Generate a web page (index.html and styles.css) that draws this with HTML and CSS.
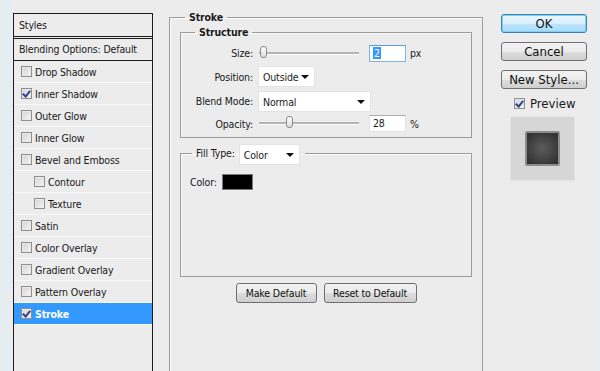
FILE: index.html
```html
<!DOCTYPE html>
<html>
<head>
<title>Layer Style</title>
<link rel="stylesheet" href="styles.css">
</head>
<body>

<div class="dialog">

    <!-- styles list -->
    <div class="styles-list">
        <div class="list-head">Styles</div>
        <div class="list-blend">Blending Options: Default</div>
        <div class="list-item"><span class="check"></span>Drop Shadow</div>
        <div class="list-item"><span class="check checked"></span>Inner Shadow</div>
        <div class="list-item"><span class="check"></span>Outer Glow</div>
        <div class="list-item"><span class="check"></span>Inner Glow</div>
        <div class="list-item"><span class="check"></span>Bevel and Emboss</div>
        <div class="list-item sub"><span class="check"></span>Contour</div>
        <div class="list-item sub"><span class="check"></span>Texture</div>
        <div class="list-item"><span class="check"></span>Satin</div>
        <div class="list-item"><span class="check"></span>Color Overlay</div>
        <div class="list-item"><span class="check"></span>Gradient Overlay</div>
        <div class="list-item"><span class="check"></span>Pattern Overlay</div>
        <div class="list-item selected"><span class="check checked"></span>Stroke</div>
    </div>

    <!-- settings -->
    <fieldset class="group stroke">
        <legend>Stroke</legend>

        <fieldset class="group structure">
            <legend>Structure</legend>

            <div class="row row-size">
                <span class="label">Size:</span>
                <div class="slider"><span class="thumb thumb-size"></span></div>
                <span class="num focused"><span class="sel">2</span></span>
                <span class="unit">px</span>
            </div>

            <div class="row row-pos">
                <span class="label">Position:</span>
                <span class="select select-pos">Outside<span class="arrow"></span></span>
            </div>

            <div class="row row-blend">
                <span class="label">Blend Mode:</span>
                <span class="select select-blend">Normal<span class="arrow"></span></span>
            </div>

            <div class="row row-opacity">
                <span class="label">Opacity:</span>
                <div class="slider"><span class="thumb thumb-opacity"></span></div>
                <span class="num">28</span>
                <span class="unit">%</span>
            </div>
        </fieldset>

        <fieldset class="group fill">
            <legend>Fill Type:<span class="select select-fill">Color<span class="arrow"></span></span></legend>
            <div class="color-row">
                <span>Color:</span>
                <span class="swatch"></span>
            </div>
        </fieldset>

        <div class="default-buttons">
            <button class="btn btn-make">Make Default</button>
            <button class="btn btn-reset">Reset to Default</button>
        </div>
    </fieldset>

    <!-- dialog buttons -->
    <div class="side">
        <button class="btn big ok">OK</button>
        <button class="btn big">Cancel</button>
        <button class="btn big">New Style...</button>
        <div class="preview-check"><span class="check checked"></span>Preview</div>
        <div class="preview-box">
            <div class="preview-square"></div>
        </div>
    </div>

</div>

</body>
</html>
```

FILE: styles.css
```css
body {
    margin: 0;
    background-color: #e6edf1;
    font-family: "DejaVu Sans Condensed", "Liberation Sans", sans-serif;
    font-size: 10.5px;
    letter-spacing: -0.15px;
    color: #1a1a1a;
}

.dialog {
    display: flex;
    align-items: stretch;
    margin-left: 11px;
    width: 584px;
    height: 371px;
    overflow: hidden;
    background-color: #ececec;
}

/* left list */

.styles-list {
    margin: 13px 0 0 2px;
    width: 140px;
    flex-shrink: 0;
    box-sizing: border-box;
    border: 1px solid #1c1c1c;
    border-bottom: none;
}

.list-head {
    height: 22px;
    line-height: 22px;
    padding-left: 5px;
    border-bottom: 3px double #1c1c1c;
}

.list-blend {
    height: 21px;
    line-height: 21px;
    padding-left: 5px;
    border-bottom: 1px solid #1c1c1c;
}

.list-item {
    display: flex;
    align-items: center;
    height: 21px;
    padding-left: 7px;
    border-bottom: 1px solid #f9f9f9;
}

.list-item.sub {
    padding-left: 20px;
}

.list-item.selected {
    background-color: #3399ff;
    color: #ffffff;
    font-weight: bold;
}

.check {
    display: inline-block;
    position: relative;
    width: 11px;
    height: 11px;
    box-sizing: border-box;
    margin-right: 3px;
    border: 1px solid #8e8f8f;
    background: linear-gradient(135deg, #d2d2d2, #f6f6f6);
    box-shadow: inset 0 0 0 1px #eaeaea;
}

.check.checked::after {
    content: "";
    position: absolute;
    left: 2px;
    top: 0px;
    width: 3px;
    height: 6px;
    border-right: 2px solid #31408f;
    border-bottom: 2px solid #31408f;
    transform: rotate(40deg);
}

/* fieldsets */

.group {
    margin: 0;
    border: 1px solid #9c9c9c;
    box-shadow: inset 1px 1px 0 #fafafa;
}

.group legend {
    line-height: 13px;
    font-weight: bold;
}

.stroke {
    margin: 11px 0 0 16px;
    width: 313px;
    flex-shrink: 0;
    box-sizing: border-box;
    padding: 2px 10px 0 10px;
    border-bottom: none;
}

.stroke > legend {
    margin-left: 5px;
    padding: 0 4px;
}

.structure {
    width: 292px;
    box-sizing: border-box;
    padding: 3px 0 3px 0;
}

.structure > legend {
    margin-left: 14px;
    padding: 0 4px;
}

.row {
    display: flex;
    align-items: center;
    height: 24px;
}

.row-size {
    height: 22px;
}

.row-pos {
    height: 25px;
}

.row-opacity {
    height: 21px;
}

.label {
    width: 72px;
    text-align: right;
    margin-right: 5px;
    flex-shrink: 0;
}

.slider {
    position: relative;
    width: 100px;
    height: 2px;
    margin-left: 1px;
    background-color: #b4b4b4;
    border-bottom: 1px solid #ffffff;
}

.thumb {
    position: absolute;
    top: -6px;
    width: 7px;
    height: 12px;
    box-sizing: border-box;
    border: 1px solid #8a8a8a;
    border-radius: 3px;
    background: linear-gradient(#ffffff, #dcdcdc);
}

.thumb-size {
    left: 1px;
}

.thumb-opacity {
    left: 27px;
}

.num {
    display: inline-block;
    width: 37px;
    height: 17px;
    box-sizing: border-box;
    margin-left: 10px;
    padding-left: 3px;
    line-height: 15px;
    background-color: #ffffff;
    border: 1px solid #e2e3ea;
    border-top-color: #abadb3;
}

.num.focused {
    border-color: #7eb4ea;
    border-top-color: #569de5;
}

.sel {
    background-color: #3399ff;
    color: #ffffff;
    padding: 0 1px;
}

.unit {
    margin-left: 4px;
}

.select {
    position: relative;
    display: inline-block;
    height: 21px;
    box-sizing: border-box;
    padding-left: 4px;
    line-height: 21px;
    font-weight: normal;
    background-color: #ffffff;
    border: 1px solid #e3e3e3;
    vertical-align: middle;
}

.select-pos {
    width: 57px;
}

.select-blend {
    width: 113px;
}

.select-fill {
    width: 61px;
    margin-left: 4px;
}

.arrow {
    position: absolute;
    right: 5px;
    top: 8px;
    border-left: 4px solid transparent;
    border-right: 4px solid transparent;
    border-top: 4px solid #111111;
}

.fill {
    width: 292px;
    box-sizing: border-box;
    margin-top: 5px;
    padding: 9px 0 0 9px;
    height: 134px;
}

.fill > legend {
    margin-left: 2px;
    padding: 0 5px 0 4px;
    line-height: 21px;
    font-weight: normal;
}

.color-row {
    display: flex;
    align-items: center;
    gap: 5px;
}

.swatch {
    width: 31px;
    height: 16px;
    box-sizing: border-box;
    background-color: #000000;
    border: 1px solid #7a7a7a;
}

/* buttons */

.btn {
    height: 20px;
    box-sizing: border-box;
    padding: 0;
    font-family: inherit;
    font-size: 10.5px;
    letter-spacing: -0.15px;
    color: #111111;
    border: 1px solid #707070;
    border-radius: 3px;
    background: linear-gradient(#f2f2f2 0%, #ebebeb 50%, #dddddd 51%, #cfcfcf 100%);
}

.default-buttons {
    display: flex;
    justify-content: center;
    gap: 7px;
    margin-top: 6px;
}

.btn-make {
    width: 81px;
}

.btn-reset {
    width: 93px;
}

.side {
    display: flex;
    flex-direction: column;
    margin: 14px 0 0 18px;
    width: 86px;
}

.btn.big {
    height: 19px;
    margin-bottom: 9px;
    font-size: 13px;
    letter-spacing: 0;
    line-height: 16px;
}

.btn.ok {
    border-color: #3c7fb1;
    background: linear-gradient(#eaf6fd 0%, #d9f0fc 50%, #bee6fd 51%, #a7d9f5 100%);
    box-shadow: inset 0 0 0 1px #7ed1f5;
}

.preview-check {
    display: flex;
    align-items: center;
    margin: -2px 0 0 13px;
    font-size: 13px;
    letter-spacing: 0;
    height: 14px;
}

.preview-check .check {
    margin-right: 5px;
}

.preview-box {
    display: flex;
    align-items: center;
    justify-content: center;
    margin: 6px 0 0 9px;
    width: 65px;
    height: 65px;
    box-sizing: border-box;
    background-color: #d6d6d6;
    border: 1px solid #e4e4e4;
}

.preview-square {
    width: 35px;
    height: 35px;
    box-sizing: border-box;
    border: 2px solid #8c8c8c;
    border-radius: 2px;
    background: radial-gradient(circle, #5c5c5c, #2c2c2c);
}
```
